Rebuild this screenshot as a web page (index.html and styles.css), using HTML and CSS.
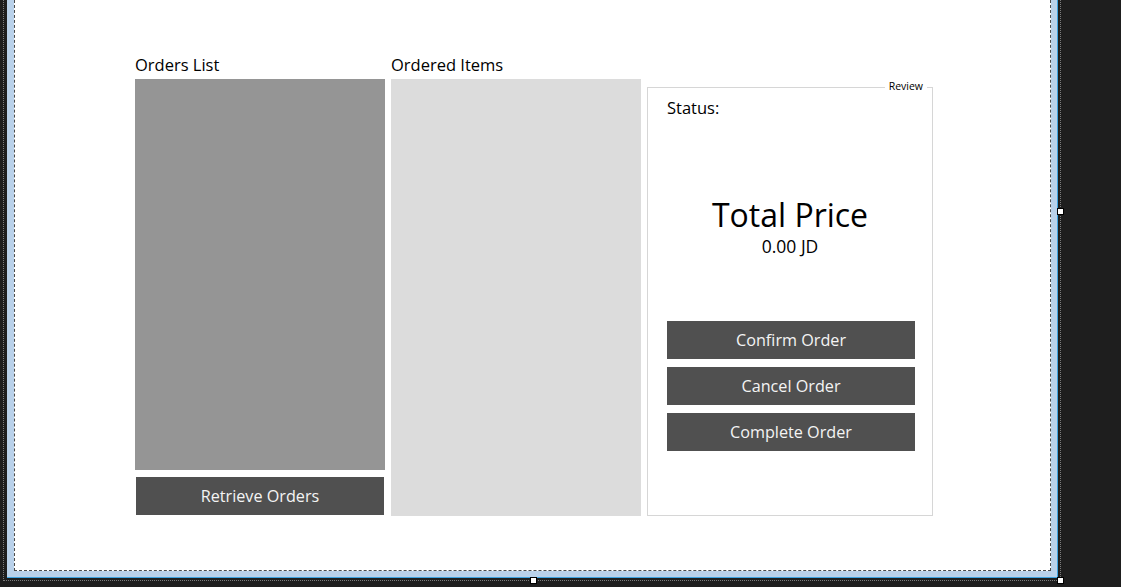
FILE: index.html
```html
<!DOCTYPE html>
<html>
<head>
<meta charset="utf-8">
<link rel="stylesheet" href="styles.css">
</head>
<body>
<div class="designer">
  <div class="selection">
    <div class="frame">
      <div class="form">
        <div class="layout">
          <div class="col">
            <div class="label">Orders List</div>
            <div class="orders-list"></div>
            <button class="btn btn-retrieve">Retrieve Orders</button>
          </div>
          <div class="col">
            <div class="label">Ordered Items</div>
            <div class="items-list"></div>
          </div>
          <div class="review">
            <span class="review-title">Review</span>
            <div class="status">Status:</div>
            <div class="total-title">Total Price</div>
            <div class="total-value">0.00 JD</div>
            <div class="actions">
              <button class="btn">Confirm Order</button>
              <button class="btn">Cancel Order</button>
              <button class="btn">Complete Order</button>
            </div>
          </div>
        </div>
      </div>
    </div>
    <span class="handle handle-right"></span>
    <span class="handle handle-bottom"></span>
    <span class="handle handle-corner"></span>
  </div>
</div>
</body>
</html>
```
FILE: styles.css
```css
html, body {
  margin: 0;
  height: 100%;
  background: #1e1e1e;
  overflow: hidden;
}
body {
  font-family: "Open Sans", "Noto Sans", sans-serif;
  color: #000;
}
.designer {
  width: 100%;
  height: 100%;
}
.selection {
  position: relative;
  margin-left: 3px;
  width: 1051px;
  padding: 0 2px 2px 3px;
  border: 1px dotted #7c7c7c;
  border-top: none;
}
.frame {
  background: #b9d1ea;
  padding: 0 6px 6px 7px;
  border-right: 1px solid #3fa3e0;
  border-bottom: 1px solid #3fa3e0;
}
.form {
  background: #fff;
  height: 570px;
  border: 1px dashed #4a4a4a;
  border-top: none;
}
.layout {
  display: flex;
  align-items: flex-start;
  gap: 6px;
  padding: 54px 0 0 120px;
}
.col {
  width: 250px;
  display: flex;
  flex-direction: column;
}
.label {
  font-size: 16.5px;
  line-height: 22px;
  margin-bottom: 3px;
  white-space: nowrap;
}
.orders-list {
  height: 391px;
  background: #959595;
}
.items-list {
  height: 437px;
  background: #dcdcdc;
}
.btn {
  display: flex;
  align-items: center;
  justify-content: center;
  width: 248px;
  height: 38px;
  padding: 0;
  border: none;
  background: #505050;
  color: #f4f4f4;
  font-family: "Open Sans", "Noto Sans", sans-serif;
  font-size: 16.2px;
}
.btn-retrieve {
  margin: 7px 1px 0;
}
.review {
  position: relative;
  box-sizing: border-box;
  width: 286px;
  height: 429px;
  margin-top: 33px;
  border: 1px solid #d6d6d6;
}
.review-title {
  position: absolute;
  top: -8px;
  right: 5px;
  padding: 0 4px;
  background: #fff;
  font-size: 10.5px;
  line-height: 12px;
}
.status {
  margin: 9px 0 0 19px;
  font-size: 16.5px;
  line-height: 22px;
}
.total-title {
  margin-top: 76px;
  text-align: center;
  font-size: 32px;
  line-height: 40px;
}
.total-value {
  text-align: center;
  font-size: 17.5px;
  line-height: 22px;
}
.actions {
  margin-top: 64px;
  padding-left: 19px;
  display: flex;
  flex-direction: column;
  gap: 8px;
}
.handle {
  position: absolute;
  width: 5px;
  height: 5px;
  background: #fff;
  border: 1px solid #000;
}
.handle-right {
  right: -4px;
  top: 208px;
}
.handle-bottom {
  left: 526px;
  bottom: -4px;
}
.handle-corner {
  right: -4px;
  bottom: -4px;
}
```
